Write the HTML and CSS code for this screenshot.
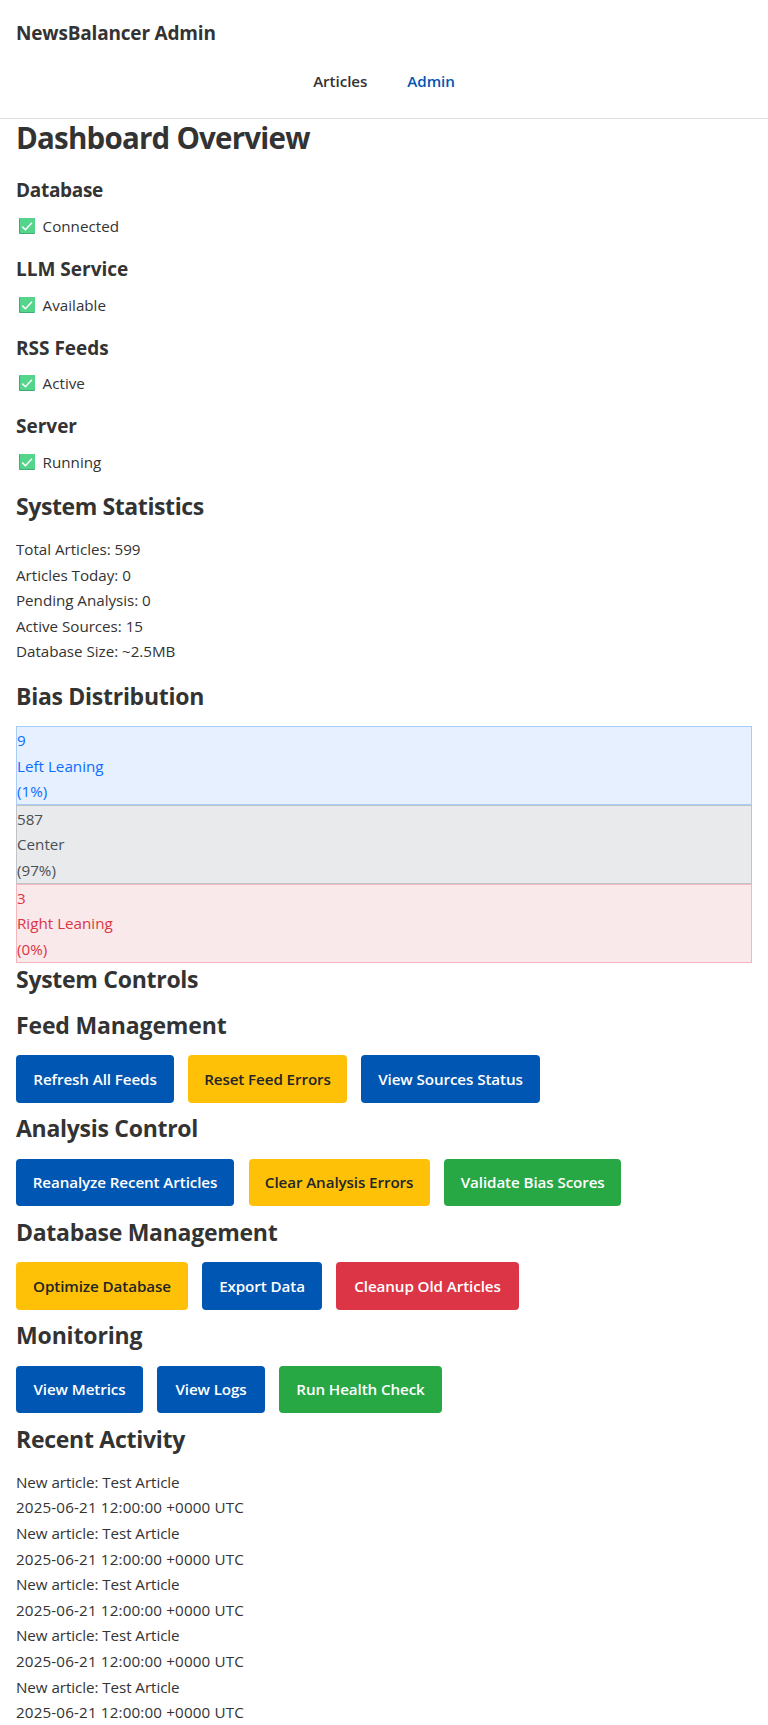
FILE: index.html
```html
<!DOCTYPE html>
<html lang="en">
<head>
<meta charset="utf-8">
<title>NewsBalancer Admin</title>
<link rel="stylesheet" href="styles.css">
</head>
<body>
<svg width="0" height="0" class="defs">
  <symbol id="check" viewBox="0 0 16 16">
    <rect width="16" height="16" rx="1" fill="#41a877"/>
    <rect x="1" width="15" height="15" rx="1" fill="#55d48c"/>
    <path d="M3.3 8.6 6.4 11.7 13 4.8" fill="none" stroke="#fff" stroke-width="1.5"/>
  </symbol>
</svg>
<header class="navbar">
  <div class="brand">NewsBalancer Admin</div>
  <nav class="nav"><a>Articles</a><a class="active">Admin</a></nav>
</header>
<main class="container">
  <h1>Dashboard Overview</h1>
  <section class="status-list">
    <div class="status"><h3>Database</h3><p><svg class="icon"><use href="#check"/></svg>Connected</p></div>
    <div class="status"><h3>LLM Service</h3><p><svg class="icon"><use href="#check"/></svg>Available</p></div>
    <div class="status"><h3>RSS Feeds</h3><p><svg class="icon"><use href="#check"/></svg>Active</p></div>
    <div class="status"><h3>Server</h3><p><svg class="icon"><use href="#check"/></svg>Running</p></div>
  </section>
  <section class="stats">
    <h2>System Statistics</h2>
    <p>Total Articles: 599</p>
    <p>Articles Today: 0</p>
    <p>Pending Analysis: 0</p>
    <p>Active Sources: 15</p>
    <p>Database Size: ~2.5MB</p>
  </section>
  <section class="bias">
    <h2>Bias Distribution</h2>
    <div class="bias-box left"><p>9</p><p>Left Leaning</p><p>(1%)</p></div>
    <div class="bias-box center"><p>587</p><p>Center</p><p>(97%)</p></div>
    <div class="bias-box right"><p>3</p><p>Right Leaning</p><p>(0%)</p></div>
  </section>
  <section class="controls">
    <h2>System Controls</h2>
    <div class="group">
      <h2 class="wide">Feed Management</h2>
      <div class="buttons feed"><button class="btn primary">Refresh All Feeds</button><button class="btn warning">Reset Feed Errors</button><button class="btn primary">View Sources Status</button></div>
    </div>
    <div class="group">
      <h2>Analysis Control</h2>
      <div class="buttons analysis"><button class="btn primary">Reanalyze Recent Articles</button><button class="btn warning">Clear Analysis Errors</button><button class="btn success">Validate Bias Scores</button></div>
    </div>
    <div class="group">
      <h2>Database Management</h2>
      <div class="buttons database"><button class="btn warning">Optimize Database</button><button class="btn primary">Export Data</button><button class="btn danger">Cleanup Old Articles</button></div>
    </div>
    <div class="group">
      <h2 class="wide">Monitoring</h2>
      <div class="buttons monitoring"><button class="btn primary">View Metrics</button><button class="btn primary">View Logs</button><button class="btn success">Run Health Check</button></div>
    </div>
  </section>
  <section class="activity">
    <h2>Recent Activity</h2>
    <p>New article: Test Article</p>
    <p class="time">2025-06-21 12:00:00 +0000 UTC</p>
    <p>New article: Test Article</p>
    <p class="time">2025-06-21 12:00:00 +0000 UTC</p>
    <p>New article: Test Article</p>
    <p class="time">2025-06-21 12:00:00 +0000 UTC</p>
    <p>New article: Test Article</p>
    <p class="time">2025-06-21 12:00:00 +0000 UTC</p>
    <p>New article: Test Article</p>
    <p class="time">2025-06-21 12:00:00 +0000 UTC</p>
  </section>
</main>
</body>
</html>
```

FILE: styles.css
```css
* { box-sizing: border-box; }
body {
  height: 1725px;
  margin: 0;
  overflow: hidden;
  background: #fff;
  color: #333;
  font-family: "Open Sans", "Noto Sans", sans-serif;
  font-size: 15.2px;
  line-height: 25.6px;
}
h1, h2, h3, p { margin: 0; }
h1, h2, h3, .brand { font-weight: 700; }
.defs { display: block; }

.navbar { height: 119px; padding: 17px 16px 0; border-bottom: 1px solid #dee2e6; }
.brand { font-size: 19px; line-height: 32px; letter-spacing: -0.18px; }
.nav { display: flex; justify-content: center; gap: 40px; margin-top: 19px; line-height: 26px; font-weight: 600; letter-spacing: -0.07px; }
.nav .active { color: #0056b3; }

.container { padding: 0 16px; }
h1 { font-size: 29.5px; line-height: 38px; letter-spacing: -0.78px; margin-bottom: 21.2px; }

.status-list { display: grid; gap: 17.3px; }
h3 { font-size: 19px; line-height: 24px; margin-bottom: 11.6px; }
.status:first-child h3 { letter-spacing: -0.3px; }
.status p { display: flex; align-items: center; height: 25.8px; }
.icon { width: 16px; height: 16px; margin: 0 7.6px 1.2px 3px; }

h2 { font-size: 23px; line-height: 28.8px; letter-spacing: -0.28px; margin-bottom: 16px; }
h2.wide { letter-spacing: -0.15px; }
.stats { margin-top: 16.5px; }
.stats h2 { letter-spacing: -0.4px; }
.stats p { letter-spacing: -0.03px; }
.bias { margin-top: 17px; }
.bias h2 { margin-bottom: 15.2px; }
.bias-box { height: 78.9px; padding-top: 1.1px; border: 1px solid; }
.left { background: #e6f0ff; border-color: #a9cdfb; color: #0d6efd; }
.center { background: #e8eaeb; border-color: #bfc4c8; color: #495057; }
.right { background: #fae9ea; border-color: #f3b7bd; color: #dc3545; }

.controls { margin-top: 2.2px; }
.controls > h2 { margin-bottom: 17.1px; }
.group { margin-bottom: 11.6px; }
.group h2 { margin-bottom: 15.6px; }
.buttons { display: grid; gap: 14px; }
.feed { grid-template-columns: 158px 159px 179px; }
.analysis { grid-template-columns: 218px 181px 177px; gap: 14.6px; }
.database { grid-template-columns: 172px 120px 183px; }
.monitoring { grid-template-columns: 127px 108px 163px; }
.btn {
  height: 47.6px;
  padding: 1px 0 0;
  border: 0;
  border-radius: 4px;
  color: #fff;
  font: 600 15.2px/25.6px "Open Sans", "Noto Sans", sans-serif;
  letter-spacing: -0.1px;
  white-space: nowrap;
}
.primary { background: #0056b3; }
.warning { background: #ffc107; color: #212529; }
.success { background: #28a745; }
.danger { background: #dc3545; }
.activity p { letter-spacing: -0.07px; }
.activity .time { letter-spacing: 0.15px; }
```
